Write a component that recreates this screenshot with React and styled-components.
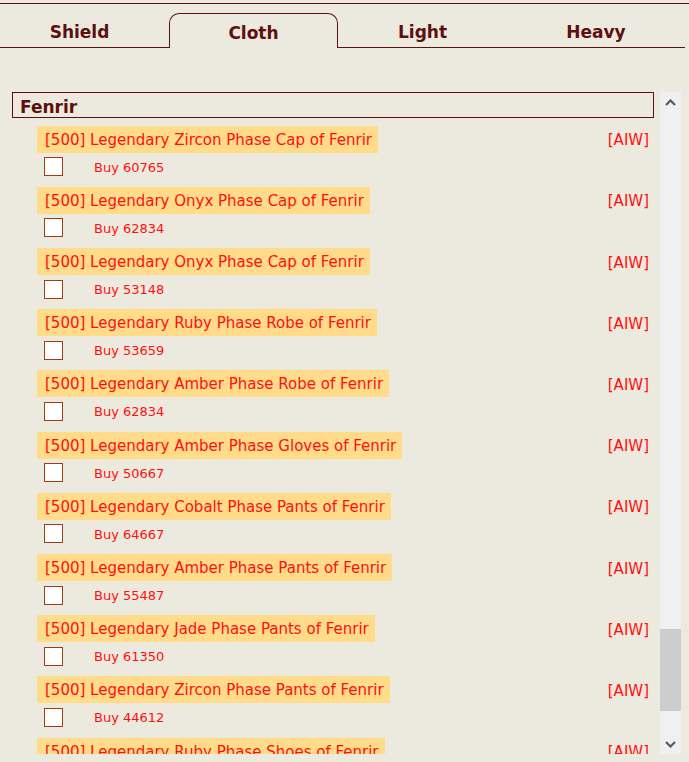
import React, { useLayoutEffect, useRef, useState } from 'react';
import styled, { createGlobalStyle } from 'styled-components';

const GlobalStyle = createGlobalStyle`
  html, body {
    margin: 0;
    padding: 0;
    background: #ece9df;
    font-family: "DejaVu Sans", Verdana, sans-serif;
  }
`;

const TABS = ['Shield', 'Cloth', 'Light', 'Heavy'];
const TAB_WIDTHS = [169, 169, 169, 178];

const GEMS = ['Zircon', 'Onyx', 'Ruby', 'Amber', 'Cobalt', 'Jade'];
const PIECES = ['Cap', 'Robe', 'Gloves', 'Pants', 'Shoes'];
const EARLIER = [
  ['Aegir', 11],
  ['Baldur', 11],
  ['Bragi', 11],
  ['Freyr', 11],
  ['Heimdall', 10],
  ['Loki', 11],
];

const FENRIR = [
  ['Zircon', 'Cap', 60765],
  ['Onyx', 'Cap', 62834],
  ['Onyx', 'Cap', 53148],
  ['Ruby', 'Robe', 53659],
  ['Amber', 'Robe', 62834],
  ['Amber', 'Gloves', 50667],
  ['Cobalt', 'Pants', 64667],
  ['Amber', 'Pants', 55487],
  ['Jade', 'Pants', 61350],
  ['Zircon', 'Pants', 44612],
  ['Ruby', 'Shoes', 58210],
  ['Jade', 'Shoes', 49931],
  ['Cobalt', 'Gloves', 57402],
];

const makeItems = (name, count, seed) =>
  Array.from({ length: count }, (_, i) => ({
    gem: GEMS[(i * 5 + seed) % GEMS.length],
    piece: PIECES[Math.floor(i / 2) % PIECES.length],
    set: name,
    price: 44000 + ((i * 7919 + seed * 3571) % 21000),
  }));

const sections = [
  ...EARLIER.map(([name, count], s) => ({ name, items: makeItems(name, count, s) })),
  {
    name: 'Fenrir',
    target: true,
    items: FENRIR.map(([gem, piece, price]) => ({ gem, piece, price, set: 'Fenrir' })),
  },
];

const Chevron = ({ down }) => (
  <svg width="11" height="7" viewBox="0 0 11 7">
    <path
      d={down ? 'M1 1 L5.5 5.5 L10 1' : 'M1 6 L5.5 1.5 L10 6'}
      fill="none"
      stroke="#5a5a5a"
      strokeWidth="2.2"
    />
  </svg>
);

const App = () => {
  const listRef = useRef(null);
  const targetRef = useRef(null);
  const trackRef = useRef(null);
  const [thumb, setThumb] = useState({ top: 0, height: 0 });

  // scroll the list down to the Fenrir set and size the thumb to match
  useLayoutEffect(() => {
    const list = listRef.current;
    const target = targetRef.current;
    const track = trackRef.current;
    if (!list || !target || !track) return;
    list.scrollTop =
      target.getBoundingClientRect().top - list.getBoundingClientRect().top + list.scrollTop;
    const len = track.clientHeight;
    setThumb({
      top: (len * list.scrollTop) / list.scrollHeight,
      height: (len * list.clientHeight) / list.scrollHeight,
    });
  }, []);

  return (
    <Page>
      <GlobalStyle />
      <TopRule />
      <TabBar>
        {TABS.map((tab, i) => (
          <Tab key={tab} $active={tab === 'Cloth'} $width={TAB_WIDTHS[i]} $first={i === 0}>
            {tab}
          </Tab>
        ))}
      </TabBar>

      <Panel>
        <List ref={listRef}>
          {sections.map((section) => (
            <Section key={section.name}>
              <SetHeader ref={section.target ? targetRef : null}>{section.name}</SetHeader>
              {section.items.map((item, i) => (
                <Item key={i}>
                  <TitleRow>
                    <Title>
                      [500] Legendary {item.gem} Phase {item.piece} of {item.set}
                    </Title>
                    <Tag>[AIW]</Tag>
                  </TitleRow>
                  <BuyRow>
                    <Check type="checkbox" />
                    <Buy>Buy {item.price}</Buy>
                  </BuyRow>
                </Item>
              ))}
            </Section>
          ))}
        </List>
        <ScrollBar>
          <ArrowButton>
            <Chevron />
          </ArrowButton>
          <Track ref={trackRef}>
            <Thumb style={{ marginTop: thumb.top, height: thumb.height }} />
          </Track>
          <ArrowButton>
            <Chevron down />
          </ArrowButton>
        </ScrollBar>
      </Panel>
    </Page>
  );
};

export default App;

const Page = styled.div`
  width: 689px;
  height: 762px;
  padding-top: 3px;
  box-sizing: border-box;
  overflow: hidden;
`;

const TopRule = styled.div`
  border-top: 1px solid #5c1010;
`;

const TabBar = styled.div`
  display: flex;
  margin-top: 9px;
  height: 35px;
`;

const Tab = styled.div`
  width: ${(p) => p.$width}px;
  box-sizing: border-box;
  display: flex;
  align-items: center;
  justify-content: center;
  padding-right: ${(p) => (p.$first ? 10 : 0)}px;
  padding-top: 3px;
  font-size: 17px;
  font-weight: bold;
  color: #5c1010;
  border-bottom: ${(p) => (p.$active ? 'none' : '1px solid #5c1010')};
  border-top: ${(p) => (p.$active ? '1px solid #5c1010' : 'none')};
  border-left: ${(p) => (p.$active ? '1px solid #5c1010' : 'none')};
  border-right: ${(p) => (p.$active ? '1px solid #5c1010' : 'none')};
  border-radius: ${(p) => (p.$active ? '10px 10px 0 0' : '0')};
`;

const Panel = styled.div`
  display: flex;
  margin: 44px 0 0 12px;
  width: 669px;
  height: 662px;
`;

const List = styled.div`
  flex: 1;
  overflow: hidden;
  padding-bottom: 18px;
  box-sizing: border-box;
`;

const ScrollBar = styled.div`
  width: 21px;
  display: flex;
  flex-direction: column;
  background: #f0f0f0;
`;

const ArrowButton = styled.div`
  height: 20px;
  display: flex;
  align-items: center;
  justify-content: center;
`;

const Track = styled.div`
  flex: 1;
  display: flex;
  flex-direction: column;
`;

const Thumb = styled.div`
  background: #cdcdcd;
`;

const Section = styled.div`
  display: flex;
  flex-direction: column;
`;

const SetHeader = styled.div`
  height: 26px;
  box-sizing: border-box;
  margin-right: 6px;
  margin-bottom: 8px;
  padding: 2px 0 0 7px;
  border: 1px solid #5c1010;
  font-size: 17px;
  font-weight: bold;
  line-height: 24px;
  color: #5c1010;
`;

const Item = styled.div`
  padding: 0 11px 11.2px 25px;
`;

const TitleRow = styled.div`
  display: flex;
  justify-content: space-between;
  align-items: center;
  height: 26px;
`;

const Title = styled.span`
  background: #ffdb8a;
  color: #ff1010;
  font-size: 15px;
  line-height: 26px;
  padding: 1px 6px 0 8px;
  white-space: nowrap;
`;

const Tag = styled.span`
  color: #ff1010;
  font-size: 15px;
  padding-top: 2px;
`;

const BuyRow = styled.div`
  display: flex;
  align-items: center;
  margin-top: 5px;
  height: 19px;
  padding-left: 7px;
`;

const Check = styled.input`
  appearance: none;
  margin: 0 31px 0 0;
  width: 19px;
  height: 19px;
  box-sizing: border-box;
  border: 1px solid #a33a10;
  background: #fff;
`;

const Buy = styled.span`
  color: #ff1010;
  font-size: 13px;
  padding-top: 1px;
`;
